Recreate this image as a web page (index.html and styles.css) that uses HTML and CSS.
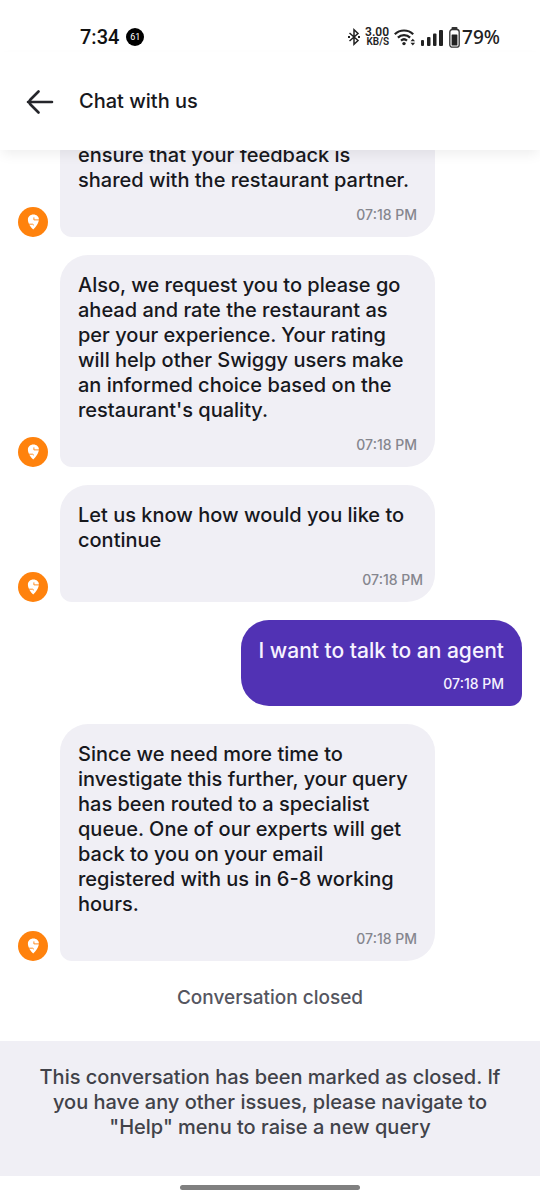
FILE: index.html
```html
<!DOCTYPE html>
<html lang="en">
<head>
<meta charset="utf-8">
<meta name="viewport" content="width=device-width, initial-scale=1">
<title>Chat with us</title>
<link rel="stylesheet" href="styles.css">
</head>
<body>
<svg class="symbols" aria-hidden="true">
  <symbol id="brand" viewBox="0 0 30 30">
    <circle cx="15" cy="15" r="15" fill="#ff820d"/>
    <path fill="#fff" d="M15.400 7.500c-3.200 0-5.500 2.200-5.500 5.100 0 3.700 2.600 7.600 5.300 10 2.600-2.400 5.500-6.300 5.700-10 .1-2.900-2.300-5.100-5.500-5.100z"/>
    <path fill="none" stroke="#ff820d" stroke-width=".9" d="M15.900 10.400v2.500h5.500M10 17.200h4.600q.9 0 .8 1.200"/>
  </symbol>
</svg>
<div class="app">
  <div class="status">
    <div class="status-group">
      <span class="clock">7:34</span>
      <span class="count">61</span>
    </div>
    <div class="status-group status-icons">
      <svg width="12" height="18" viewBox="0 0 12 18" fill="none" stroke="#222" stroke-width="1.500"><path d="M1.500 5l8.500 7.500-4 3.700V1.800l4 3.700L1.500 13"/><path d="M0 9h2M10 9h2" stroke-width="2"/></svg>
      <span class="speed"><span>3.00</span><span class="unit">KB/S</span></span>
      <svg width="22" height="18" viewBox="0 0 22 18" fill="none" stroke="#222" stroke-width="2.200"><path d="M.8 6.300a13 13 0 0 1 18.400 0M3.900 9.600a8.600 8.600 0 0 1 12.200 0M7 12.600a4.500 4.500 0 0 1 6 0"/><circle cx="10" cy="15.600" r="1.700" fill="#222" stroke="none"/><path d="M16.500 13.300l2.300-2.600 2.300 2.600zM16.500 14.800l2.300 2.600 2.300-2.600z" fill="#222" stroke="none"/></svg>
      <svg width="23" height="17" viewBox="0 0 23 17" fill="#222"><rect x="0" y="11" width="3" height="6" rx="1"/><rect x="6" y="8" width="3.500" height="9" rx="1"/><rect x="12" y="4.500" width="3.500" height="12.500" rx="1"/><rect x="18" y="1" width="4" height="16" rx="1"/></svg>
      <svg width="11" height="21" viewBox="0 0 11 21"><rect x="2.500" y="0" width="6" height="2.500" rx="1" fill="#333"/><rect x=".8" y="2.500" width="9.400" height="17.700" rx="2.500" fill="none" stroke="#333" stroke-width="1.300"/><rect x="2.600" y="7.500" width="5.800" height="11" rx=".5" fill="#222"/></svg>
      <span class="percent">79%</span>
    </div>
  </div>
  <header class="header">
    <button class="back" type="button" aria-label="Back">
      <svg width="28" height="24" viewBox="0 0 28 24" fill="none" stroke="#25262b" stroke-width="2.600" stroke-linecap="round" stroke-linejoin="round"><path d="M26 12H2M12.500 1.500L4.500 9.500Q2 12 4.500 14.500L12.500 22.500"/></svg>
    </button>
    <h1 class="title">Chat with us</h1>
  </header>
  <main class="chat">
    <div class="message">
      <svg class="avatar" role="img" aria-label="Swiggy"><use href="#brand"/></svg>
      <div class="bubble"><p class="text">ensure that your feedback is<br>shared with the restaurant partner.</p><time class="time">07:18 PM</time></div>
    </div>
    <div class="message">
      <svg class="avatar" role="img" aria-label="Swiggy"><use href="#brand"/></svg>
      <div class="bubble"><p class="text">Also, we request you to please go ahead and rate the restaurant as per your experience. Your rating will help other Swiggy users make an informed choice based on the restaurant's quality.</p><time class="time">07:18 PM</time></div>
    </div>
    <div class="message">
      <svg class="avatar" role="img" aria-label="Swiggy"><use href="#brand"/></svg>
      <div class="bubble bubble-prompt"><p class="text">Let us know how would you like to continue</p><time class="time">07:18 PM</time></div>
    </div>
    <div class="message message-own">
      <div class="bubble bubble-own"><p class="text">I want to talk to an agent</p><time class="time">07:18 PM</time></div>
    </div>
    <div class="message">
      <svg class="avatar" role="img" aria-label="Swiggy"><use href="#brand"/></svg>
      <div class="bubble"><p class="text">Since we need more time to investigate this further, your query has been routed to a specialist queue. One of our experts will get back to you on your email registered with us in 6-8 working hours.</p><time class="time">07:18 PM</time></div>
    </div>
    <p class="closed">Conversation closed</p>
  </main>
  <footer class="notice">This conversation has been marked as closed. If you have any other issues, please navigate to "Help" menu to raise a new query</footer>
  <div class="gesture"><span class="handle"></span></div>
</div>
</body>
</html>
```
FILE: styles.css
```css
* { box-sizing: border-box; }
body {
  margin: 0;
  background: #fff;
  color: #17181d;
  font-family: Inter, "Liberation Sans", sans-serif;
  font-size: 20px;
  font-weight: 500;
  line-height: 25px;
}
p, h1 { margin: 0; }
.symbols { display: none; }
.app { display: flex; flex-direction: column; height: 100vh; }
.status {
  display: flex;
  flex: none;
  justify-content: space-between;
  align-items: center;
  height: 52px;
  padding: 22px 40px 0 80px;
  font-family: Roboto, sans-serif;
}
.status-group { display: flex; align-items: center; gap: 7px; }
.status-icons { gap: 5px; }
.clock { font-size: 20px; color: #111; }
.count {
  width: 18px;
  height: 18px;
  border-radius: 50%;
  background: #000;
  color: #fff;
  font-size: 9px;
  font-weight: 400;
  line-height: 18px;
  text-align: center;
}
.speed {
  display: flex;
  flex-direction: column;
  align-items: flex-end;
  font: 600 12px/10px Roboto, sans-serif;
  color: #222;
}
.unit { font-size: 10px; }
.percent { font: 500 19px/25px "Noto Sans", sans-serif; color: #222; margin-left: -3px; }
.header {
  z-index: 1;
  display: flex;
  flex: none;
  align-items: center;
  gap: 25px;
  height: 98px;
  padding: 0 26px;
  background: #fff;
  box-shadow: 0 6px 12px -2px rgba(0, 0, 0, .07);
}
.back { display: flex; padding: 2px 0 0; border: 0; background: none; }
.title { font-size: 20px; font-weight: 500; }
.chat {
  display: flex;
  flex: 1;
  flex-direction: column;
  justify-content: flex-end;
  gap: 18px;
  min-height: 0;
  padding: 0 18px;
  overflow: hidden;
}
.message { display: flex; flex: none; align-items: flex-end; gap: 12px; }
.message-own { justify-content: flex-end; }
.avatar { flex: none; width: 30px; height: 30px; }
.bubble {
  flex: 0 1 375px;
  padding: 18px 18px 13px;
  border-radius: 28px 28px 28px 12px;
  background: #f0eff5;
}
.time {
  display: block;
  margin-top: 13px;
  color: #85868e;
  font-size: 14px;
  line-height: 18px;
  text-align: right;
}
.bubble-prompt { padding-right: 12px; }
.bubble-prompt .time { margin-top: 18px; }
.bubble-own {
  flex: 0 1 auto;
  border-radius: 28px 28px 12px 28px;
  background: #5132b4;
  color: #f7f3ff;
  font-size: 21px;
}
.bubble-own .time { margin-top: 12px; color: #f7f3ff; }
.closed { flex: none; padding: 6px 0 31px; color: #55565f; font-size: 19px; text-align: center; }
.notice {
  flex: none;
  padding: 24px 36px 36px;
  background: #f0eff5;
  color: #414249;
  text-align: center;
}
.gesture { display: flex; flex: none; justify-content: center; height: 24px; padding-top: 9px; }
.handle { width: 33.333%; height: 5px; border-radius: 3px; background: #808080; }
```
